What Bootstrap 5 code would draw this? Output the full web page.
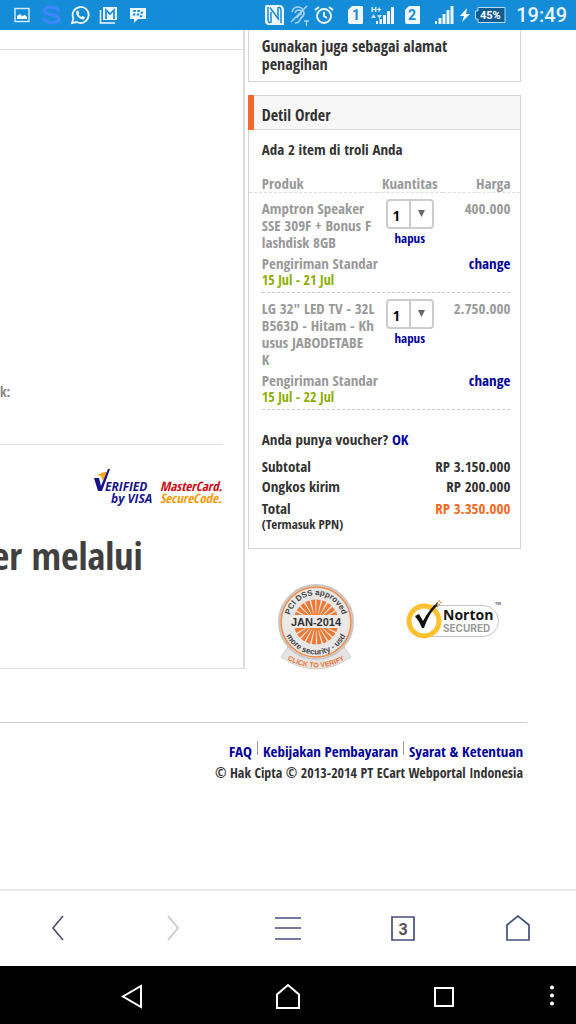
<!DOCTYPE html>
<html lang="id">
<head>
<meta charset="utf-8">
<meta name="viewport" content="width=device-width, initial-scale=1">
<title>Detil Order</title>
<link rel="stylesheet" href="https://cdn.jsdelivr.net/npm/bootstrap@5.3.0/dist/css/bootstrap.min.css">
<style>
  body { font: 700 15px/17px "Open Sans Condensed", "Open Sans", sans-serif; color: #333; background: #fff; }
  a { color: #00009c; text-decoration: none; }
  svg { display: block; flex: none; }
  .status-bar { background: #158cd8; height: 30px; color: #e8f4fc; }
  .status-left { gap: 9px; padding-left: 12px; }
  .status-right { padding-right: 9px; }
  .status-right .sim-one { margin: 0 8px 0 13px; }
  .status-right .sim-two { margin: 0 14px 0 10px; }
  .clock { font: 500 20px/30px Roboto, sans-serif; margin-left: 10px; }
  .line { border: 0 solid #ddd; }
  .left-pane { width: 42.5%; height: 639px; border-right-width: 2px; border-bottom-width: 1px; }
  .left-rule { height: 20px; border-bottom-width: 1px; }
  .left-note { height: 395px; padding-top: 333px; border-bottom-width: 1px; font: 400 14px/18px "Open Sans Condensed", "Open Sans", sans-serif; color: #888; margin-right: 20px; }
  .card-marks { padding: 22px 20px 0 0; }
  .pay-title { font-size: 38px; line-height: 44px; color: #404040; padding-right: 100px; margin-top: 21px; }
  .right-pane { width: 47.5%; margin-left: 3px; }
  .panel { border: 1px solid #d4d4d4; }
  .panel-top { font-size: 16px; line-height: 18px; padding: 7px 12px 8px 13px; border-top: 0; }
  .order-panel { margin-top: 13px; }
  .panel-title { background: #f7f7f7; border-bottom: 1px solid #ddd; position: relative; height: 34px; padding: 10px 13px 0; font-size: 16px; line-height: 18px; }
  .panel-title::before { content: ""; position: absolute; left: -1px; top: -1px; bottom: -1px; width: 6px; background: #f26a2e; }
  .count { padding: 11px 13px 0; }
  .order-table { width: 100%; color: #999; margin-top: 17px; table-layout: fixed; }
  .order-table th, .order-table td { padding: 0; vertical-align: top; }
  .order-table th:first-child, .order-table td:first-child { padding-left: 13px; }
  .order-table th:last-child, .order-table td:last-child { padding-right: 10px; }
  .order-table thead th { border-bottom: 1px dashed #ddd; }
  .order-table .item td { padding-top: 7px; padding-bottom: 4px; }
  .name-col { width: 128px; }
  .qty-col { width: 66px; }
  .ship { line-height: 16px; border-bottom: 1px dashed #ccc; padding-bottom: 4px; }
  .eta { color: #8aae00; font-size: 14px; }
  .qty { appearance: none; display: block; width: 48px; height: 30px; margin: -1px auto 0; padding: 2px 0 0 5px; border: 2px solid #ccc; border-radius: 4px; color: #000; font: inherit;
    background: #fff url("data:image/svg+xml,%3Csvg xmlns='http://www.w3.org/2000/svg' width='23' height='26'%3E%3Cpath d='M1 0V26' stroke='%23ccc' stroke-width='2'/%3E%3Cpath d='M9 9h7l-3.500 7z' fill='%23666'/%3E%3C/svg%3E") right center no-repeat; }
  .remove { font-size: 13px; line-height: 16px; }
  .sums { padding: 21px 10px 17px 13px; }
  .sum-row { line-height: 20px; }
  .sum-total { margin-top: 2px; }
  .total { color: #f26a1e; }
  .fine { font-size: 13px; line-height: 13px; }
  .seals { padding: 34px 18px 0 29px; }
  .norton { margin-top: 14px; }
  .site-foot { margin: 51px 49px 0 0; border-top: 1px solid #ccc; padding: 18px 4px 0 0; line-height: 21px; }
  .foot-links { gap: 5px; }
  .bar { width: 1px; height: 14px; background: #999; }
  .copyright { font-size: 14px; }
  .browser-bar { height: 77px; border-top: 2px solid #e8e8e8; padding-bottom: 2px; }
  .browser-bar .btn, .system-bar .btn { border: 0; border-radius: 0; padding: 0; }
  .system-bar { background: #000; height: 58px; position: relative; gap: 126px; }
  .more { position: absolute; right: 14px; top: 18px; }
</style>
</head>
<body class="d-flex flex-column min-vh-100 overflow-hidden">

<header class="status-bar d-flex align-items-center">
  <div class="status-left d-flex align-items-center">
    <svg width="20" height="20" fill="none" stroke="#d8ecf9" stroke-width="1.4"><rect x="3" y="3.500" width="14" height="13"/><path d="M5 14v-3l3-2 2 2 3-1 2 2v2z" fill="#fff" stroke="none"/></svg>
    <svg width="20" height="20" fill="none" stroke="#3d85f8" stroke-width="3.500"><path d="M18 6.500C15 1 3 1 3 6C3 10 18 9 18 14C18 19 5 19 2 13"/></svg>
    <svg width="20" height="20" fill="none" stroke="#f0f8fd" stroke-width="1.800"><path d="M2 18l1.400-4.600A8 8 0 1 1 6.800 17z"/><path d="M6.500 6l1.500-.6 1.400 2.600-.9 1.200q1 2 2.800 2.700l1.200-1 2.400 1.400-.7 1.700q-2 1.300-5-1-3.700-3-2.700-7z" fill="#fff" stroke="none"/></svg>
    <svg width="20" height="20" fill="none" stroke="#f0f8fd" stroke-width="1.500"><path d="M1.500 5v13H16"/><path d="M4 2h14v13H4z" fill="#e8f4fc" stroke="none"/><path d="M7 14V5l4 4 4-4v9" stroke="#158cd8" stroke-width="1.700"/></svg>
    <svg width="20" height="20"><path d="M2 3h16v11h-8l-4 4v-4H2z" fill="#edf7fd"/><g fill="#158cd8"><path d="M5.500 5h2.500l-.4 2H5zM9.500 5H12l-.4 2H9zM5 8.500h2.500l-.4 2H4.600zM9 8.500h2.500l-.4 2H8.600zM12.800 6.800h2.400l-.4 2h-2.400zM12 10.200h2.400l-.4 2h-2.400z"/></g></svg>
  </div>
  <div class="status-right d-flex align-items-center ms-auto">
    <svg width="22" height="20"><path d="M3 0h13q5 0 5 5v15H6q-4 0-4-4V3q0-3 1-3z" fill="#edf7fd"/><path d="M5 2v13q0 2 2 3M18 18V5q0-2-2-3M7 2.500L16 15M8 7v11M15 2v11" fill="none" stroke="#158cd8" stroke-width="1.500"/></svg>
    <svg class="ms-1" width="24" height="22" fill="none" stroke="#a4d2f0" stroke-width="1.600"><path d="M3 8Q4 3 9 3T15 9Q15 12 12 14Q10 19 6 19M6 9q1-3 4-3t2 4q-3 1-4 4M2 18L18 2"/><path d="M15 17h5M17.500 17v5" stroke-width="1.300"/></svg>
    <svg width="22" height="22" fill="none" stroke="#edf7fd" stroke-width="1.900"><circle cx="11" cy="12" r="7"/><path d="M11 8v4l3 2M2 6l4-3M20 6l-4-3"/></svg>
    <svg class="sim-one" width="15" height="20"><path d="M4 1h10q1 0 1 1v16q0 1-1 1H2q-2 0-2-2V5z" fill="#edf7fd"/><text x="4" y="15" font-family="Roboto" font-weight="700" font-size="14" fill="#158cd8">1</text></svg>
    <svg width="24" height="24"><text x="0" y="9" font-family="Roboto" font-weight="700" font-size="8" fill="#edf7fd">H+</text><path d="M0 15l2.500-4 2.500 4zM6 12h5l-2.500 4z" fill="#bfe0f5"/><path d="M5 21v-3h2v3zM8.500 21v-5h2.500v5zM12 21v-9h3v9zM16 21V8h3v13zM20 21V4h3v17z" fill="#edf7fd"/></svg>
    <svg class="sim-two" width="15" height="20"><path d="M4 1h10q1 0 1 1v16q0 1-1 1H2q-2 0-2-2V5z" fill="#edf7fd"/><text x="3" y="15" font-family="Roboto" font-weight="700" font-size="14" fill="#158cd8">2</text></svg>
    <svg width="20" height="20"><path d="M1 19v-3h2v3zM4.500 19v-6h3v6zM8.500 19V9h3v10zM12.500 19V5h3v14zM16.500 19V1h3v18z" fill="#edf7fd"/></svg>
    <svg class="ms-1" width="12" height="16"><path d="M9 1L2 9h4L4 15l8-8H8z" fill="#fff"/></svg>
    <svg class="ms-1" width="32" height="18"><path d="M4 1.500h27v15H4V13H1.500V5H4z" fill="#0f5c93" stroke="#b7dcf3"/><text x="6" y="13" font-family="Roboto" font-weight="700" font-size="11" fill="#fff">45%</text></svg>
    <span class="clock">19:49</span>
  </div>
</header>

<main class="flex-grow-1">
  <div class="d-flex">
    <section class="left-pane line overflow-hidden">
      <div class="left-rule line"></div>
      <div class="left-note line">k:</div>
      <div class="card-marks d-flex justify-content-end">
        <svg width="130" height="45" font-family="Open Sans, sans-serif" font-weight="700" font-style="italic">
          <path d="M4 8l7-3 3 0-4 9-2-5z" fill="#f6a31c"/>
          <path d="M1 11h5l2 8L15 2h2L9 24H5z" fill="#14148c"/>
          <text x="12" y="24" font-size="12" fill="#14148c">ERIFIED</text>
          <text x="18" y="36" font-size="12" fill="#14148c">by VISA</text>
          <g font-family="Open Sans Condensed" font-size="13"><text x="67" y="24" fill="#cc0a14">MasterCard.</text><text x="67" y="36" fill="#f79a0a">SecureCode.</text></g>
        </svg>
      </div>
      <h1 class="pay-title d-flex justify-content-end text-nowrap fw-bold mb-0">er melalui</h1>
    </section>

    <section class="right-pane">
      <div class="panel panel-top">Gunakan juga sebagai alamat<br>penagihan</div>
      <div class="panel order-panel">
        <div class="panel-title">Detil Order</div>
        <div class="count">Ada 2 item di troli Anda</div>
        <table class="order-table">
          <colgroup><col class="name-col"><col class="qty-col"><col></colgroup>
          <thead><tr><th>Produk</th><th class="text-center">Kuantitas</th><th class="text-end">Harga</th></tr></thead>
          <tbody>
            <tr class="item">
              <td>Amptron Speaker<br>SSE 309F + Bonus F<br>lashdisk 8GB</td>
              <td class="text-center"><select class="qty" aria-label="Kuantitas Amptron Speaker"><option>1</option></select><a class="remove" href="#">hapus</a></td>
              <td class="text-end">400.000</td>
            </tr>
            <tr><td colspan="3"><div class="ship d-flex justify-content-between"><span>Pengiriman Standar<br><span class="eta">15 Jul - 21 Jul</span></span><a href="#">change</a></div></td></tr>
            <tr class="item">
              <td>LG 32" LED TV - 32L<br>B563D - Hitam - Kh<br>usus JABODETABE<br>K</td>
              <td class="text-center"><select class="qty" aria-label="Kuantitas LG LED TV"><option>1</option></select><a class="remove" href="#">hapus</a></td>
              <td class="text-end">2.750.000</td>
            </tr>
            <tr><td colspan="3"><div class="ship d-flex justify-content-between"><span>Pengiriman Standar<br><span class="eta">15 Jul - 22 Jul</span></span><a href="#">change</a></div></td></tr>
          </tbody>
        </table>
        <div class="sums">
          <div class="mb-2">Anda punya voucher? <a href="#">OK</a></div>
          <div class="sum-row d-flex justify-content-between"><span>Subtotal</span><span>RP 3.150.000</span></div>
          <div class="sum-row d-flex justify-content-between"><span>Ongkos kirim</span><span>RP 200.000</span></div>
          <div class="sum-row sum-total d-flex justify-content-between"><span>Total</span><span class="total">RP 3.350.000</span></div>
          <div class="fine">(Termasuk PPN)</div>
        </div>
      </div>
      <div class="seals d-flex justify-content-between">
        <svg width="78" height="88" viewBox="0 0 78 88" font-family="Liberation Sans, sans-serif">
          <defs><path id="arcTop" d="M12 39a27 27 0 0 1 54 0"/><path id="arcLow" d="M6.500 39a32.500 32.500 0 0 0 65 0"/><path id="arcRibbon" d="M9 76Q39 93 69 76"/></defs>
          <path d="M12 62L4 74Q39 98 74 74L66 62z" fill="#e6e4e3" stroke="#d0cdcb"/>
          <circle cx="39" cy="39" r="37" fill="#e8e7e6" stroke="#c8c6c5" stroke-width="2"/>
          <circle cx="39" cy="39" r="35" fill="none" stroke="#f08a48" stroke-width="1.600"/>
          <circle cx="39" cy="39" r="14" fill="none" stroke="#ef7a33" stroke-width="17" stroke-dasharray="2.700 .965"/>
          <circle cx="39" cy="39" r="9" fill="#f4843c"/>
          <path d="M8 32h62v13H8z" fill="#ecebea"/>
          <text x="39" y="43" font-size="11" font-weight="700" fill="#333" text-anchor="middle">JAN-2014</text>
          <g font-size="8" font-weight="700" fill="#444" text-anchor="middle"><text><textPath href="#arcTop" startOffset="50%">PCI DSS approved</textPath></text><text><textPath href="#arcLow" startOffset="50%">more security - usd</textPath></text></g>
          <text font-size="7" font-weight="700" fill="#ee7430" text-anchor="middle"><textPath href="#arcRibbon" startOffset="50%">CLICK TO VERIFY</textPath></text>
        </svg>
        <svg class="norton" width="99" height="44" viewBox="0 0 99 44">
          <path d="M19 8.500H79a15.500 15.500 0 0 1 0 31H19" fill="#fff" stroke="#c4c4c4"/>
          <circle cx="20" cy="24" r="15" fill="#fff" stroke="#fdc02f" stroke-width="5"/>
          <path d="M11 19l4-2 4 7Q26 11 34 5l-1 4Q25 16 20 31h-2Q15 24 11 19z" fill="#111"/>
          <path d="M31 8l5-5M33 10l5-6" stroke="#b98b2a" stroke-width="1.200" stroke-dasharray="1.500 1"/>
          <text x="39" y="23" font-family="Open Sans" font-weight="700" font-size="14" fill="#161616">Norton</text>
          <text x="39" y="35" font-family="Inter" font-size="10" fill="#999">SECURED</text>
          <text x="91" y="8" font-family="Open Sans" font-size="4" fill="#666">TM</text>
        </svg>
      </div>
    </section>
  </div>

  <footer class="site-foot">
    <nav class="foot-links d-flex justify-content-end">
      <a href="#">FAQ</a><span class="bar"></span><a href="#">Kebijakan Pembayaran</a><span class="bar"></span><a href="#">Syarat &amp; Ketentuan</a>
    </nav>
    <div class="copyright text-end">© Hak Cipta © 2013-2014 PT ECart Webportal Indonesia</div>
  </footer>
</main>

<nav class="browser-bar d-flex align-items-center justify-content-around">
  <button class="btn" aria-label="Kembali"><svg width="30" height="30" fill="none" stroke="#454f7d" stroke-width="1.600"><path d="M20 3L10 15l10 12"/></svg></button>
  <button class="btn" aria-label="Maju"><svg width="30" height="30" fill="none" stroke="#c4c5d5" stroke-width="1.600"><path d="M10 3l10 12-10 12"/></svg></button>
  <button class="btn" aria-label="Menu"><svg width="30" height="30" stroke="#454f7d" stroke-width="1.700"><path d="M2 5h26M2 15h26M2 26h26"/></svg></button>
  <button class="btn" aria-label="Tab"><svg width="30" height="30"><path d="M4 4h22v23H4z" fill="none" stroke="#454f7d" stroke-width="1.700"/><text x="15" y="22" text-anchor="middle" font-family="Roboto" font-weight="700" font-size="16" fill="#555">3</text></svg></button>
  <button class="btn" aria-label="Beranda"><svg width="30" height="30" fill="none" stroke="#454f7d" stroke-width="1.700"><path d="M4 27V12L15 3l11 9v15z"/></svg></button>
</nav>
<nav class="system-bar d-flex align-items-center justify-content-center">
  <button class="btn" aria-label="Kembali"><svg width="30" height="30" fill="none" stroke="#fff" stroke-width="2"><path d="M24 6v21L6 16.500z"/></svg></button>
  <button class="btn" aria-label="Layar utama"><svg width="30" height="30" fill="none" stroke="#fff" stroke-width="2"><path d="M4 28V14.500L15 5l11 9.500V28z"/></svg></button>
  <button class="btn" aria-label="Aplikasi terbaru"><svg width="30" height="30" fill="none" stroke="#fff" stroke-width="2"><path d="M6 8h18v18H6z"/></svg></button>
  <button class="btn more" aria-label="Lainnya"><svg width="20" height="24" fill="#fff"><circle cx="10" cy="3.500" r="2"/><circle cx="10" cy="11.500" r="2"/><circle cx="10" cy="19.500" r="2"/></svg></button>
</nav>
<script src="https://cdn.jsdelivr.net/npm/bootstrap@5.3.0/dist/js/bootstrap.bundle.min.js"></script>
</body>
</html>
